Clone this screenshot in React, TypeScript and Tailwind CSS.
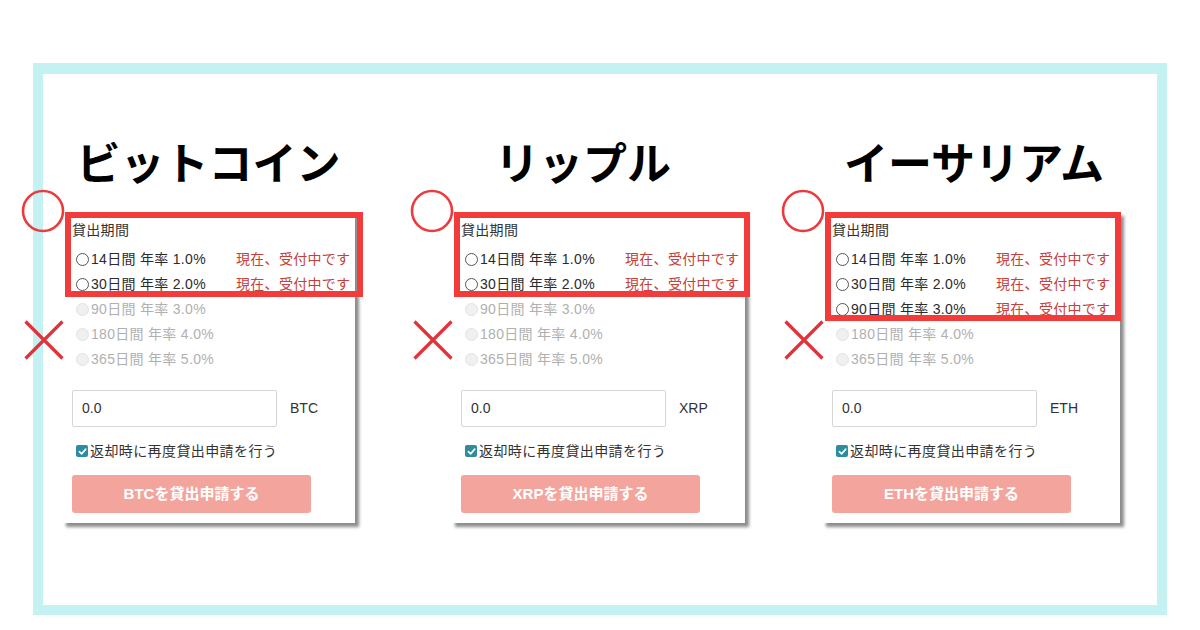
import React from "react";

type Term = { days: number; rate: string };

type Coin = {
  title: string;
  unit: string;
  open: number;
  col: string;
  panel: string;
  titleShift: string;
  boxW: string;
};

const terms: Term[] = [
  { days: 14, rate: "1.0%" },
  { days: 30, rate: "2.0%" },
  { days: 90, rate: "3.0%" },
  { days: 180, rate: "4.0%" },
  { days: 365, rate: "5.0%" },
];

const coins: Coin[] = [
  { title: "ビットコイン", unit: "BTC", open: 2, col: "ml-[19px]", panel: "w-[293px]", titleShift: "", boxW: "w-[298px]" },
  { title: "リップル", unit: "XRP", open: 2, col: "ml-[96px]", panel: "w-[294px]", titleShift: "pr-[30px]", boxW: "w-[296px]" },
  { title: "イーサリアム", unit: "ETH", open: 3, col: "ml-[77px]", panel: "w-[298px]", titleShift: "pl-[6px]", boxW: "w-[296px]" },
];

function Radio({ on }: { on: boolean }) {
  return (
    <span
      className={
        on
          ? "ml-[4px] mr-[2px] inline-block h-[13px] w-[13px] rounded-full border border-[#555] bg-white"
          : "ml-[4px] mr-[2px] inline-block h-[13px] w-[13px] rounded-full border border-[#e2e2e2] bg-[#f0f0f0]"
      }
    />
  );
}

function CheckBox() {
  return (
    <span className="ml-[4px] mr-[2px] flex h-[12px] w-[12px] items-center justify-center rounded-[2px] bg-[#2d8d9f]">
      <svg width="9" height="9" viewBox="0 0 10 10" fill="none">
        <path d="M1.5 5.2 L4 7.6 L8.6 2.4" stroke="#fff" strokeWidth="1.8" strokeLinecap="round" strokeLinejoin="round" />
      </svg>
    </span>
  );
}

function OkMark() {
  return (
    <svg className="absolute left-[-41px] top-[-23px]" width="44" height="44" viewBox="0 0 44 44">
      <circle cx="22" cy="22" r="20" fill="none" stroke="#ec3a3d" strokeWidth="2.6" />
    </svg>
  );
}

function NgMark() {
  return (
    <svg className="absolute left-[-38px] top-[108px]" width="40" height="40" viewBox="0 0 40 40">
      <path d="M1.5 1.5 L38.5 38.5 M38.5 1.5 L1.5 38.5" stroke="#e3323a" strokeWidth="3.2" />
    </svg>
  );
}

function LendPanel({ coin }: { coin: Coin }) {
  return (
    <div className={`relative bg-white pb-[10px] shadow-[4px_4px_3px_rgba(0,0,0,0.45)] ${coin.panel}`}>
      <div className="pl-[10px] pt-[8px] text-[14px] leading-[20px] tracking-[0.3px] text-[#333]">貸出期間</div>
      <div className="mt-[7px]">
        {terms.map((t, i) => {
          const on = i < coin.open;
          return (
            <div key={t.days} className="flex h-[25px] items-center pl-[10px] text-[14px] tracking-[0.3px]">
              <Radio on={on} />
              <span className={on ? "w-[145px] text-[#2b2b2b]" : "w-[145px] text-[#b0b0b0]"}>
                {t.days}日間 年率 {t.rate}
              </span>
              {on && <span className="text-[#c6403b]">現在、受付中です</span>}
            </div>
          );
        })}
      </div>
      <div className="mt-[18px] flex items-center pl-[10px]">
        <div className="flex h-[37px] w-[205px] items-center rounded-[2px] border border-[#d6d6d6] px-[9px] text-[14px] text-[#333]">
          0.0
        </div>
        <span className="ml-[13px] text-[14px] text-[#333]">{coin.unit}</span>
      </div>
      <div className="mt-[14px] flex h-[20px] items-center pl-[10px] text-[14px] tracking-[0.4px] text-[#333]">
        <CheckBox />
        返却時に再度貸出申請を行う
      </div>
      <div className="ml-[10px] mt-[14px] flex h-[38px] w-[239px] items-center justify-center rounded-[3px] bg-[#f3a59d] text-[15px] font-bold text-white">
        {coin.unit}を貸出申請する
      </div>

      {/* annotations drawn over the form */}
      <div
        className={`absolute left-[3px] top-0 border-[6px] border-[#f23b3b] ${coin.boxW} ${
          coin.open === 3 ? "h-[109px]" : "h-[85px]"
        }`}
      />
      <OkMark />
      <NgMark />
    </div>
  );
}

export default function App() {
  return (
    <div className="h-[630px] w-[1200px] overflow-hidden bg-white font-['Liberation_Sans','Noto_Sans_CJK_JP',sans-serif]">
      <div className="ml-[33px] mt-[63px] flex h-[552px] w-[1134px] items-start border-[10px] border-t-[11px] border-[#c4f2f2]">
        {coins.map((c) => (
          <div key={c.unit} className={`flex flex-col pt-[65px] ${c.col}`}>
            <div
              className={`text-center font-['Noto_Sans_CJK_JP',sans-serif] text-[44px] font-bold leading-[44px] text-black ${c.titleShift}`}
            >
              {c.title}
            </div>
            <div className="mt-[29px]">
              <LendPanel coin={c} />
            </div>
          </div>
        ))}
      </div>
    </div>
  );
}
